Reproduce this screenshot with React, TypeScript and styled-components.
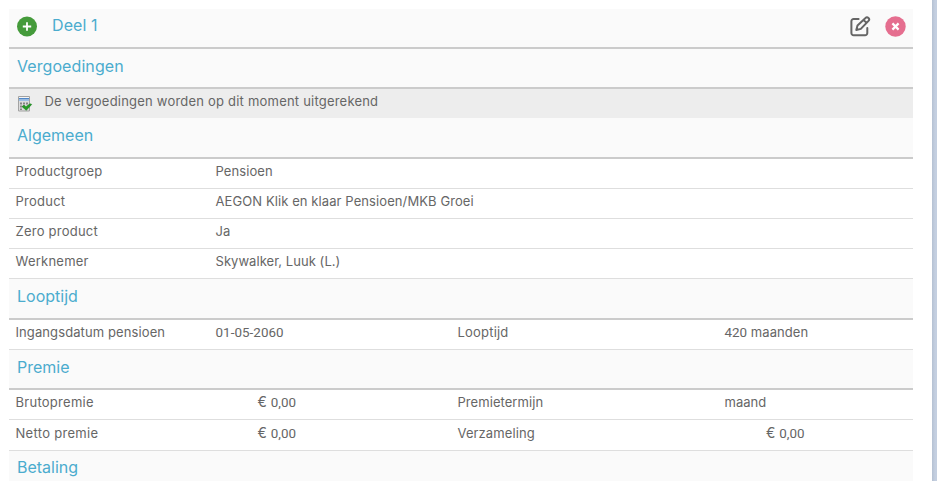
import React from 'react';
import styled, { createGlobalStyle } from 'styled-components';

const GlobalStyle = createGlobalStyle`
  * { box-sizing: border-box; }
  body {
    margin: 0;
    background: #fff;
    color: #666;
    font: 13px/16px Inter, 'Liberation Sans', sans-serif;
    overflow: hidden;
  }
`;

const Page = styled.div`
  display: flex;
  height: 481px;
  overflow: hidden;
  justify-content: space-between;
  padding-left: 9px;
`;

const Sheet = styled.main`
  width: 904px;
  padding-top: 9px;
`;

const Edge = styled.div`
  width: 5px;
  background: linear-gradient(to right, #b5c1d2, #c4cfe0 60%);
`;

const Section = styled.header<{ $h?: number; $top?: number }>`
  display: flex;
  align-items: flex-start;
  height: ${(p) => p.$h ?? 40}px;
  padding: ${(p) => p.$top ?? 7}px 7px 0 8px;
  background: #fafafa;
  border-bottom: 2px solid #cbcbcb;
`;

const Title = styled.h2<{ $track?: number }>`
  margin: 0;
  font-size: 16px;
  line-height: 20px;
  font-weight: 400;
  color: #4bacce;
  white-space: nowrap;
  letter-spacing: ${(p) => p.$track ?? 0}px;
`;

const PartTitle = styled(Title)`
  flex: 1;
  margin: -1px 0 0 14px;
`;

const Actions = styled.div`
  display: flex;
  gap: 14px;
`;

const Notice = styled.div`
  display: flex;
  height: 29px;
  padding: 4px 0 0 9px;
  background: #ededed;
`;

const NoticeIcon = styled.span`
  width: 26.5px;
  padding-top: 3px;
`;

const Row = styled.div<{ $h?: number; $top?: number }>`
  display: grid;
  grid-template-columns: 200px 242px 267px 1fr;
  align-items: baseline;
  height: ${(p) => p.$h ?? 30}px;
  padding: ${(p) => p.$top ?? 4}px 0 0 6.5px;
  border-bottom: 1px solid #dedede;
`;

const Text = styled.span<{ $track?: number }>`
  white-space: nowrap;
  letter-spacing: ${(p) => p.$track ?? 0}px;
`;

const Digits = styled(Text)`
  font-family: Roboto, sans-serif;
  font-size: 13.4px;
`;

const AmountBox = styled(Digits)<{ $w?: number }>`
  display: flex;
  align-items: baseline;
  justify-content: flex-end;
  gap: 4px;
  width: ${(p) => p.$w ?? 80.5}px;
`;

const Euro = styled.span`
  font-family: Inter, sans-serif;
  font-size: 14px;
`;

const Amount = ({ value, width }: { value: string; width?: number }) => (
  <AmountBox $w={width}>
    <Euro>€</Euro>
    <span>{value}</span>
  </AmountBox>
);

const Svg = styled.svg`
  display: block;
  flex: none;
`;

const AddIcon = () => (
  <Svg width="21" height="21" viewBox="0 0 21 21">
    <circle cx="10" cy="10.5" r="10" fill="#459b3b" />
    <path d="M10 6.3v8.4M5.8 10.5h8.4" stroke="#fff" strokeWidth="1.8" />
  </Svg>
);

const EditIcon = () => (
  <Svg width="21" height="21" viewBox="0 0 21 21" fill="none" stroke="#666" strokeWidth="2" strokeLinejoin="round" strokeLinecap="round">
    <path d="M8.6 3H3.6a2.2 2.2 0 0 0-2.2 2.2v11.9a2.2 2.2 0 0 0 2.2 2.2h11.5a2.2 2.2 0 0 0 2.2-2.2V12" />
    <path d="M6.3 14l1.2-4.6 8-7.4a2 2 0 0 1 3 2.9l-7.7 8zM13.5 3.9l3 3" />
  </Svg>
);

const RemoveIcon = () => (
  <Svg width="21" height="21" viewBox="0 0 21 21">
    <circle cx="10.5" cy="10.5" r="10.2" fill="#e56e8f" />
    <path d="M7.4 7.4l6.2 6.2M13.6 7.4l-6.2 6.2" stroke="#fff" strokeWidth="2.2" />
  </Svg>
);

const CalculatorIcon = () => (
  <Svg width="15" height="16" viewBox="0 0 15 16">
    <path d="M.5 .5h11v14.5H.5z" fill="#dcdcdc" stroke="#a2a2a2" />
    <path d="M1 1h10v1H1z" fill="#f5f5f5" />
    <path d="M1 2h10v1.5H1z" fill="#4f87c9" />
    <path d="M1 3.5h10V5H1z" fill="#9cc0e6" />
    <path d="M2 6.5h2v2H2zM5 6.5h2v2H5zM8 6.5h2v2H8zM2 9.5h2v2H2zM5 9.5h2v2H5zM2 12.5h2v1.5H2z" fill="#858585" />
    <path d="M4 10.6l2-1.3 2 1.4L12 7.8l1.7.6L8.3 14.3z" fill="#249b24" stroke="#167d19" strokeWidth=".6" />
  </Svg>
);

export default function App() {
  return (
    <>
      <GlobalStyle />
      <Page>
        <Sheet>
          <Section>
            <AddIcon />
            <PartTitle $track={0.08}>Deel 1</PartTitle>
            <Actions>
              <EditIcon />
              <RemoveIcon />
            </Actions>
          </Section>
          <Section><Title $track={0.08}>Vergoedingen</Title></Section>
          <Notice>
            <NoticeIcon><CalculatorIcon /></NoticeIcon>
            <Text $track={0.21}>De vergoedingen worden op dit moment uitgerekend</Text>
          </Notice>
          <Section $h={41}><Title>Algemeen</Title></Section>
          <Row>
            <Text $track={0.25}>Productgroep</Text>
            <Text $track={0.08}>Pensioen</Text>
          </Row>
          <Row>
            <Text $track={0.25}>Product</Text>
            <Text $track={0.09}>AEGON Klik en klaar Pensioen/MKB Groei</Text>
          </Row>
          <Row>
            <Text $track={0.24}>Zero product</Text>
            <Text>Ja</Text>
          </Row>
          <Row>
            <Text $track={0.24}>Werknemer</Text>
            <Text $track={0.05}>Skywalker, Luuk (L.)</Text>
          </Row>
          <Section $h={41}><Title>Looptijd</Title></Section>
          <Row>
            <Text $track={0.1}>Ingangsdatum pensioen</Text>
            <Digits $track={0.06}>01-05-2060</Digits>
            <Text $track={0.2}>Looptijd</Text>
            <Text $track={0.07}><Digits>420</Digits> maanden</Text>
          </Row>
          <Section><Title>Premie</Title></Section>
          <Row>
            <Text $track={0.27}>Brutopremie</Text>
            <Amount value="0,00" />
            <Text $track={0.06}>Premietermijn</Text>
            <Text>maand</Text>
          </Row>
          <Row $h={31} $top={5}>
            <Text $track={0.3}>Netto premie</Text>
            <Amount value="0,00" />
            <Text $track={0.1}>Verzameling</Text>
            <Amount value="0,00" width={80} />
          </Row>
          <Section $top={6}><Title>Betaling</Title></Section>
        </Sheet>
        <Edge />
      </Page>
    </>
  );
}
